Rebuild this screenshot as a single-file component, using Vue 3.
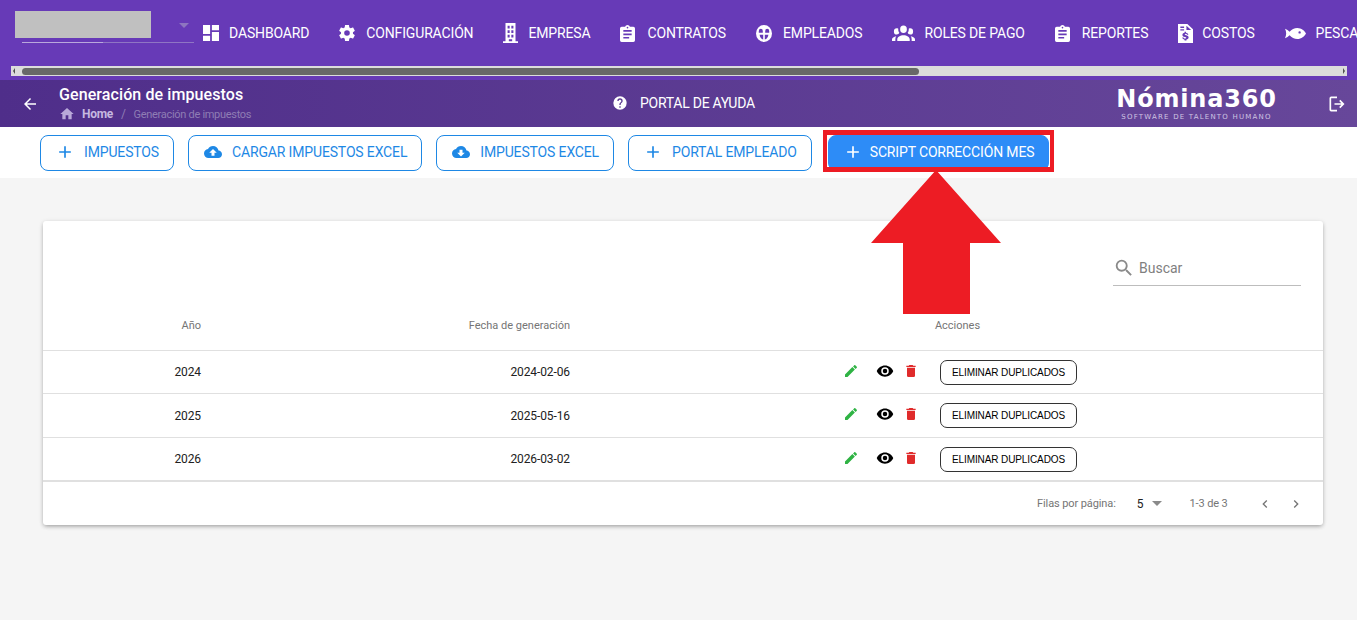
<template>
  <div class="page">
    <header class="topbar">
      <div class="topbar-row">
        <div class="company-select">
          <div class="company-blot"></div>
          <span class="caret caret-top"></span>
        </div>
        <nav class="menu">
          <a v-for="item in menu" :key="item.label" class="menu-item" :style="{ gap: item.gap + 'px' }">
            <svg :style="{ width: item.w + 'px', height: item.h + 'px' }" :viewBox="item.box" fill="#fff" fill-rule="evenodd" preserveAspectRatio="none">
              <path :d="item.icon" />
            </svg>
            <span>{{ item.label }}</span>
          </a>
        </nav>
      </div>
      <div class="scrollbar">
        <span class="scroll-arrow left"></span>
        <div class="scroll-thumb"></div>
        <span class="scroll-arrow right"></span>
      </div>
    </header>

    <section class="toolbar">
      <svg class="back" viewBox="0 0 24 24" fill="#fff"><path :d="icons.back" /></svg>
      <div class="heading">
        <h1>Generación de impuestos</h1>
        <div class="crumbs">
          <svg viewBox="0 0 24 24" fill="#b9a9d9"><path :d="icons.home" /></svg>
          <b>Home</b>
          <i>/</i>
          <span>Generación de impuestos</span>
        </div>
      </div>
      <div class="help">
        <svg viewBox="0 0 24 24" fill="#fff"><path :d="icons.help" /></svg>
        <span>PORTAL DE AYUDA</span>
      </div>
      <div class="logo">
        <strong>Nómina360</strong>
        <small>SOFTWARE DE TALENTO HUMANO</small>
      </div>
      <svg class="logout" viewBox="0 0 24 24" fill="#fff"><path :d="icons.logout" /></svg>
    </section>

    <section class="actions">
      <button v-for="btn in buttons" :key="btn.label" class="action-btn" :class="{ primary: btn.primary, plus: btn.icon === icons.plus }">
        <svg viewBox="0 0 24 24" fill="currentColor"><path :d="btn.icon" /></svg>
        {{ btn.label }}
      </button>
    </section>

    <main class="content">
      <div class="card">
        <div class="search-row">
          <label class="search">
            <svg viewBox="0 0 24 24" fill="#8a8a8a"><path :d="icons.search" /></svg>
            <span>Buscar</span>
          </label>
        </div>
        <div class="row head">
          <div>Año</div>
          <div>Fecha de generación</div>
          <div class="center">Acciones</div>
        </div>
        <div v-for="row in rows" :key="row.year" class="row body">
          <div>{{ row.year }}</div>
          <div>{{ row.date }}</div>
          <div class="center tools">
            <svg class="pencil" viewBox="0 0 24 24" fill="#2fb344"><path :d="icons.pencil" /></svg>
            <svg class="eye" viewBox="0 0 24 24" fill="#000"><path :d="icons.eye" /></svg>
            <svg class="trash" viewBox="0 0 24 24" fill="#e02b2b"><path :d="icons.trash" /></svg>
            <button class="dup-btn">ELIMINAR DUPLICADOS</button>
          </div>
        </div>
        <div class="pager">
          <span class="pager-label">Filas por página:</span>
          <span class="pager-size">5</span>
          <span class="caret caret-pager"></span>
          <span class="pager-range">1-3 de 3</span>
          <svg class="chev" viewBox="0 0 24 24" fill="#757575"><path d="M15.41 7.41 14 6l-6 6 6 6 1.41-1.41L10.83 12z" /></svg>
          <svg class="chev" viewBox="0 0 24 24" fill="#757575"><path d="M10 6 8.59 7.41 13.17 12l-4.58 4.59L10 18l6-6z" /></svg>
        </div>
      </div>
    </main>

    <svg class="big-arrow" viewBox="0 0 130 144" fill="#ed1c24">
      <polygon points="65,0 130,73 99,73 99,144 32,144 32,73 0,73" />
    </svg>
  </div>
</template>

<script setup>
const icons = {
  back: 'M20 11H7.83l5.59-5.59L12 4l-8 8 8 8 1.41-1.41L7.83 13H20v-2z',
  home: 'M10 20v-6h4v6h5v-8h3L12 3 2 12h3v8z',
  help: 'M15.07,11.25L14.17,12.17C13.45,12.89 13,13.5 13,15H11V14.5C11,13.39 11.45,12.39 12.17,11.67L13.41,10.41C13.78,10.05 14,9.55 14,9C14,7.89 13.1,7 12,7A2,2 0 0,0 10,9H8A4,4 0 0,1 12,5A4,4 0 0,1 16,9C16,9.88 15.64,10.67 15.07,11.25M13,19H11V17H13M12,2A10,10 0 0,0 2,12A10,10 0 0,0 12,22A10,10 0 0,0 22,12C22,6.47 17.5,2 12,2Z',
  logout: 'M5 3h7v2H5v14h7v2H5a2 2 0 0 1-2-2V5a2 2 0 0 1 2-2zM16 7l5 5-5 5-1.4-1.4L17.2 13H9v-2h8.2l-2.6-2.6z',
  search: 'M9.5,3A6.5,6.5 0 0,1 16,9.5C16,11.11 15.41,12.59 14.44,13.73L14.71,14H15.5L20.5,19L19,20.5L14,15.5V14.71L13.73,14.44C12.59,15.41 11.11,16 9.5,16A6.5,6.5 0 0,1 3,9.5A6.5,6.5 0 0,1 9.5,3M9.5,5C7,5 5,7 5,9.5C5,12 7,14 9.5,14C12,14 14,12 14,9.5C14,7 12,5 9.5,5Z',
  pencil: 'M20.71,7.04C21.1,6.65 21.1,6 20.71,5.63L18.37,3.29C18,2.9 17.35,2.9 16.96,3.29L15.12,5.12L18.87,8.87M3,17.25V21H6.75L17.81,9.93L14.06,6.18L3,17.25Z',
  eye: 'M12,9A3,3 0 0,0 9,12A3,3 0 0,0 12,15A3,3 0 0,0 15,12A3,3 0 0,0 12,9M12,17A5,5 0 0,1 7,12A5,5 0 0,1 12,7A5,5 0 0,1 17,12A5,5 0 0,1 12,17M12,4.5C7,4.5 2.73,7.61 1,12C2.73,16.39 7,19.5 12,19.5C17,19.5 21.27,16.39 23,12C21.27,7.61 17,4.5 12,4.5Z',
  trash: 'M19,4H15.5L14.5,3H9.5L8.5,4H5V6H19M6,19A2,2 0 0,0 8,21H16A2,2 0 0,0 18,19V7H6V19Z',
  plus: 'M19 13h-6v6h-2v-6H5v-2h6V5h2v6h6v2z',
  upload: 'M19.35 10.04C18.67 6.59 15.64 4 12 4 9.11 4 6.6 5.64 5.35 8.04 2.34 8.36 0 10.91 0 14c0 3.31 2.69 6 6 6h13c2.76 0 5-2.24 5-5 0-2.64-2.05-4.78-4.65-4.96zM14 13v4h-4v-4H7l5-5 5 5h-3z',
  download: 'M19.35 10.04C18.67 6.59 15.64 4 12 4 9.11 4 6.6 5.64 5.35 8.04 2.34 8.36 0 10.91 0 14c0 3.31 2.69 6 6 6h13c2.76 0 5-2.24 5-5 0-2.64-2.05-4.78-4.65-4.96zM17 13l-5 5-5-5h3V9h4v4h3z'
};

const clipboard = 'M17,9H7V7H17M17,13H7V11H17M14,17H7V15H14M12,3A1,1 0 0,1 13,4A1,1 0 0,1 12,5A1,1 0 0,1 11,4A1,1 0 0,1 12,3M19,3H14.82C14.4,1.84 13.3,1 12,1C10.7,1 9.6,1.84 9.18,3H5A2,2 0 0,0 3,5V19A2,2 0 0,0 5,21H19A2,2 0 0,0 21,19V5A2,2 0 0,0 19,3Z';

const menu = [
  { label: 'DASHBOARD', box: '3 3 18 18', w: 16, h: 16, gap: 10, icon: 'M13,3V9H21V3M13,21H21V11H13M3,21H11V15H3M3,13H11V3H3V13Z' },
  { label: 'CONFIGURACIÓN', box: '2 2 20 20', w: 16, h: 16, gap: 11, icon: 'M12,15.5A3.5,3.5 0 0,1 8.5,12A3.5,3.5 0 0,1 12,8.5A3.5,3.5 0 0,1 15.5,12A3.5,3.5 0 0,1 12,15.5M19.43,12.97C19.47,12.65 19.5,12.33 19.5,12C19.5,11.67 19.47,11.34 19.43,11L21.54,9.37C21.73,9.22 21.78,8.95 21.66,8.73L19.66,5.27C19.54,5.05 19.27,4.96 19.05,5.05L16.56,6.05C16.04,5.66 15.5,5.32 14.87,5.07L14.5,2.42C14.46,2.18 14.25,2 14,2H10C9.75,2 9.54,2.18 9.5,2.42L9.13,5.07C8.5,5.32 7.96,5.66 7.44,6.05L4.95,5.05C4.73,4.96 4.46,5.05 4.34,5.27L2.34,8.73C2.21,8.95 2.27,9.22 2.46,9.37L4.57,11C4.53,11.34 4.5,11.67 4.5,12C4.5,12.33 4.53,12.65 4.57,12.97L2.46,14.63C2.27,14.78 2.21,15.05 2.34,15.27L4.34,18.73C4.46,18.95 4.73,19.03 4.95,18.95L7.44,17.94C7.96,18.34 8.5,18.68 9.13,18.93L9.5,21.58C9.54,21.82 9.75,22 10,22H14C14.25,22 14.46,21.82 14.5,21.58L14.87,18.93C15.5,18.67 16.04,18.34 16.56,17.94L19.05,18.95C19.27,19.03 19.54,18.95 19.66,18.73L21.66,15.27C21.78,15.05 21.73,14.78 21.54,14.63L19.43,12.97Z' },
  { label: 'EMPRESA', box: '3 1 18 22', w: 15, h: 20, gap: 10, icon: 'M6 1h12v20h3v2H3v-2h3zM8.500 4v3h2.500V4zM13 4v3h2.500V4zM8.500 9v3h2.500V9zM13 9v3h2.500V9zM8.500 14v3h2.500v-3zM13 14v3h2.500v-3zM10 19v2h4v-2z' },
  { label: 'CONTRATOS', box: '3 1 18 20', w: 15, h: 17, gap: 12, icon: clipboard },
  { label: 'EMPLEADOS', box: '2 2 20 20', w: 16, h: 17, gap: 11, icon: 'M12 2a10 10 0 1 0 0 20 10 10 0 0 0 0-20zM8 6.500a2.500 2.500 0 0 1 2.500 2.500v2h-5V9A2.500 2.500 0 0 1 8 6.500zM16 6.500A2.500 2.500 0 0 1 18.500 9v2h-5V9A2.500 2.500 0 0 1 16 6.500zM6.500 13.500H11V19q-3.500-.5-4.500-5.500zM13 13.500h4.500q-1 5-4.500 5.500z' },
  { label: 'ROLES DE PAGO', box: '0 5 24 15', w: 23, h: 16, gap: 9, icon: 'M12,5.500A3.500,3.500 0 0,1 15.500,9A3.500,3.500 0 0,1 12,12.500A3.500,3.500 0 0,1 8.500,9A3.500,3.500 0 0,1 12,5.500M5,8C5.560,8 6.080,8.150 6.530,8.420C6.380,9.850 6.800,11.270 7.660,12.380C7.160,13.340 6.160,14 5,14A3,3 0 0,1 2,11A3,3 0 0,1 5,8M19,8A3,3 0 0,1 22,11A3,3 0 0,1 19,14C17.840,14 16.840,13.340 16.340,12.380C17.200,11.270 17.620,9.850 17.470,8.420C17.920,8.150 18.440,8 19,8M5.500,18.250C5.500,16.180 8.410,14.500 12,14.500C15.590,14.500 18.500,16.180 18.500,18.250V20H5.500V18.250M0,20V18.500C0,17.110 1.890,15.940 4.450,15.600C3.860,16.280 3.500,17.220 3.500,18.250V20H0M24,20H20.500V18.250C20.500,17.220 20.140,16.280 19.550,15.600C22.110,15.940 24,17.110 24,18.500V20Z' },
  { label: 'REPORTES', box: '3 1 18 20', w: 15, h: 17, gap: 12, icon: clipboard },
  { label: 'COSTOS', box: '4 1 16 22', w: 15, h: 19, gap: 9, icon: 'M4 1h10l6 6v16H4zM13 3v5h5zM6.500 4v1.500h4V4zM6.500 7v1.500h4V7zM11 10v1.200c-1.400.3-2.300 1.200-2.300 2.400 0 1.500 1.200 2 2.700 2.400 1 .3 1.400.5 1.400 1s-.5.8-1.300.8c-.9 0-1.500-.4-1.600-1.100H8.500c.1 1.300 1 2.100 2.500 2.400V20h2v-1.100c1.400-.3 2.300-1.200 2.300-2.400 0-1.600-1.300-2.100-2.800-2.500-1-.3-1.300-.5-1.300-.9s.4-.7 1.100-.7c.8 0 1.200.4 1.300 1h1.400c-.1-1.200-.9-2-2.500-2.300V10z' },
  { label: 'PESCA', box: '1 5 23 14', w: 21, h: 13, gap: 10, icon: 'M1 7c2 .8 3.700 2 5 3.200C8.200 7.800 11.200 6 14.500 6 19 6 22.500 9 24 12c-1.500 3-5 6-9.500 6-3.300 0-6.300-1.800-8.500-4.200C4.700 15 3 16.200 1 17c.8-1.700 1.300-3.300 1.300-5S1.800 8.700 1 7zM17 9.500a1.300 1.300 0 1 0 0 2.600 1.300 1.300 0 0 0 0-2.600z' }
];

const buttons = [
  { label: 'IMPUESTOS', icon: icons.plus },
  { label: 'CARGAR IMPUESTOS EXCEL', icon: icons.upload },
  { label: 'IMPUESTOS EXCEL', icon: icons.download },
  { label: 'PORTAL EMPLEADO', icon: icons.plus },
  { label: 'SCRIPT CORRECCIÓN MES', icon: icons.plus, primary: true }
];

const rows = [
  { year: 2024, date: '2024-02-06' },
  { year: 2025, date: '2025-05-16' },
  { year: 2026, date: '2026-03-02' }
];
</script>

<style>
html,
body {
  margin: 0;
  background: #f5f5f5;
  overflow: hidden;
}
</style>

<style scoped>
.page {
  position: relative;
  height: 620px;
  overflow: hidden;
  background: #f5f5f5;
  font-family: Roboto, "Liberation Sans", sans-serif;
  color: #212121;
}

/* top menu */
.topbar {
  height: 80px;
  background: #673ab7;
}

.topbar-row {
  display: flex;
  height: 66px;
  align-items: center;
  padding-left: 22px;
  overflow: hidden;
}

.company-select {
  position: relative;
  flex: none;
  align-self: flex-start;
  display: flex;
  justify-content: flex-end;
  align-items: flex-start;
  box-sizing: border-box;
  width: 172px;
  height: 43px;
  margin-right: 9px;
  padding: 23px 5px 0 0;
  background: linear-gradient(90deg, #b9a8dc 47%, #8f75c4 47%) bottom / 100% 1px no-repeat;
}

.company-blot {
  position: absolute;
  left: -7px;
  top: 11px;
  width: 136px;
  height: 27px;
  background: #c0c0c0;
}

.caret {
  width: 0;
  height: 0;
  border-left: 5.5px solid transparent;
  border-right: 5.5px solid transparent;
}

.caret-top {
  border-top: 5.5px solid #8e75c0;
}

.menu {
  display: flex;
  gap: 30px;
  flex: none;
}

.menu-item {
  display: flex;
  align-items: center;
  color: #fff;
  font-size: 14px;
  letter-spacing: -0.15px;
  white-space: nowrap;
}

.menu-item svg {
  flex: none;
}

.scrollbar {
  display: flex;
  align-items: center;
  height: 10px;
  margin: 0 10px 0 11px;
  background: #dcdcdc;
}

.scroll-thumb {
  width: 897px;
  height: 7px;
  margin-left: 7px;
  border-radius: 4px;
  background: #686868;
}

.scroll-arrow {
  width: 0;
  height: 0;
  border-top: 3px solid transparent;
  border-bottom: 3px solid transparent;
}

.scroll-arrow.left {
  margin-left: 2px;
  border-right: 2px solid #505050;
}

.scroll-arrow.right {
  margin-left: auto;
  margin-right: 2px;
  border-left: 2px solid #505050;
}

/* page title bar */
.toolbar {
  display: flex;
  align-items: center;
  height: 47px;
  padding-left: 21px;
  color: #fff;
  background: linear-gradient(90deg, #4f2e8a, #67479a);
}

.back {
  width: 18px;
  height: 18px;
  margin-right: 20px;
  flex: none;
}

.heading {
  width: 553px;
  flex: none;
}

.heading h1 {
  margin: 0;
  font-size: 16px;
  line-height: 20px;
  font-weight: 500;
  letter-spacing: 0.1px;
}

.crumbs {
  display: flex;
  align-items: center;
  height: 16px;
  margin-top: 1px;
  font-size: 11px;
  letter-spacing: -0.3px;
  color: #8f7db4;
}

.crumbs svg {
  width: 16px;
  height: 16px;
  margin-right: 7px;
}

.crumbs b {
  font-size: 12px;
  color: #c6b9e0;
  font-weight: 700;
}

.crumbs i {
  margin: 0 8px;
  font-size: 12px;
  font-style: normal;
}

.help {
  display: flex;
  align-items: center;
  width: 504px;
  flex: none;
  gap: 12px;
  padding-bottom: 2px;
  font-size: 14px;
  letter-spacing: -0.25px;
}

.help svg {
  width: 16px;
  height: 16px;
}

.logo {
  width: 161px;
  flex: none;
  display: flex;
  flex-direction: column;
  align-items: center;
  font-family: "DejaVu Sans", Inter, sans-serif;
}

.logo strong {
  font-size: 24px;
  line-height: 27px;
  font-weight: 700;
  letter-spacing: 0.8px;
  white-space: nowrap;
}

.logo small {
  font-size: 7px;
  line-height: 9px;
  letter-spacing: 1.2px;
  color: #cfc4e2;
  white-space: nowrap;
}

.logout {
  width: 20px;
  height: 20px;
  margin-left: 50px;
  flex: none;
}

/* button row */
.actions {
  display: flex;
  gap: 14px;
  height: 51px;
  box-sizing: border-box;
  padding: 8px 0 0 40px;
  background: #fff;
}

.action-btn {
  position: relative;
  display: flex;
  align-items: center;
  gap: 10px;
  height: 36px;
  padding: 0 14px 2px 15px;
  border: 1px solid #1e88e5;
  border-radius: 8px;
  background: #fff;
  color: #1e88e5;
  font: 14px Roboto, "Liberation Sans", sans-serif;
  letter-spacing: -0.15px;
  white-space: nowrap;
}

.action-btn svg {
  width: 18px;
  height: 18px;
  flex: none;
}

.action-btn.plus svg {
  width: 20px;
  height: 20px;
  margin: 0 -1px;
}

.action-btn.primary {
  margin-left: 2px;
  gap: 8px;
  background: #2d8cf7;
  border-color: #2d8cf7;
  color: #fff;
}

.action-btn.primary::after {
  content: "";
  position: absolute;
  left: -6px;
  right: -6px;
  top: -6px;
  bottom: -2px;
  border: 5px solid #ed1c24;
  border-left-width: 4px;
  border-right-width: 4px;
}

/* table */
.content {
  padding: 43px 34px 0 43px;
}

.card {
  height: 304px;
  border-radius: 3px;
  background: #fff;
  box-shadow: 0 2px 4px -1px rgba(0, 0, 0, 0.3), 0 1px 5px rgba(0, 0, 0, 0.12);
}

.search-row {
  display: flex;
  justify-content: flex-end;
  height: 82px;
  padding-right: 22px;
  box-sizing: border-box;
  padding-top: 35px;
}

.search {
  display: flex;
  align-items: center;
  gap: 4px;
  width: 188px;
  height: 23px;
  padding-bottom: 6px;
  border-bottom: 1px solid #bdbdbd;
  font-size: 14px;
  color: #808080;
}

.search svg {
  width: 22px;
  height: 22px;
}

.row {
  display: grid;
  grid-template-columns: 158px 369px 1fr;
  align-items: center;
  box-sizing: border-box;
  font-size: 12px;
  text-align: right;
  border-bottom: 1px solid #e0e0e0;
}

.row.head {
  height: 48px;
  padding-bottom: 2px;
  font-size: 11px;
  color: #757575;
}

.row.body {
  height: 43px;
  letter-spacing: -0.1px;
  color: #212121;
}

.row.body:nth-child(4) {
  height: 44px;
}

.center {
  display: flex;
  justify-content: center;
  align-items: center;
  padding-left: 27px;
}

.row.head .center {
  padding-left: 22px;
}

.tools svg {
  margin-bottom: 3px;
  flex: none;
}

.pencil {
  width: 16px;
  height: 16px;
  margin-right: 17px;
}

.eye {
  width: 18px;
  height: 18px;
  margin-right: 9px;
}

.trash {
  width: 16px;
  height: 16px;
  margin-right: 21px;
}

.dup-btn {
  width: 137px;
  height: 25px;
  padding: 0;
  border: 1px solid #333;
  border-radius: 7px;
  background: #fff;
  color: #000;
  font: 10px "Liberation Sans", Arial, sans-serif;
  letter-spacing: -0.1px;
}

.pager {
  display: flex;
  align-items: center;
  box-sizing: border-box;
  height: 44px;
  padding-left: 994px;
  font-size: 11px;
  letter-spacing: -0.1px;
  color: #757575;
  border-top: 1px solid #e0e0e0;
}

.pager-size {
  margin-left: 21px;
  font-size: 12px;
  color: #212121;
}

.caret-pager {
  margin-left: 9px;
  border-top: 5.5px solid #8a8a8a;
}

.pager-range {
  margin-left: 27px;
  margin-right: 29px;
}

.chev {
  width: 16px;
  height: 16px;
  margin-right: 15px;
}

/* annotation over the page */
.big-arrow {
  position: absolute;
  left: 871px;
  top: 170px;
  width: 130px;
  height: 144px;
}
</style>
